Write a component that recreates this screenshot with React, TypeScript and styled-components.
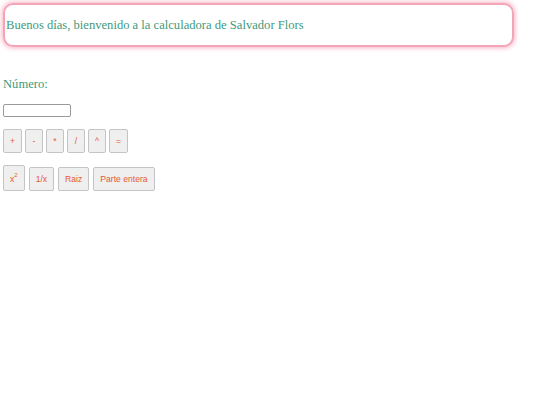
import { createGlobalStyle } from "styled-components";
import styled from "styled-components";

// === Global page reset ===
const GlobalStyle = createGlobalStyle`
  html, body {
    margin: 0;
    padding: 0;
    background: #ffffff;
  }
`;

// Outer wrapper for the calculator page
const Page = styled.main`
  display: flex;
  flex-direction: column;
  align-items: flex-start;
  padding: 3px;
  width: 511px;
  font-family: "Liberation Serif", "Times New Roman", serif;
`;

// Pink rounded greeting banner
const Banner = styled.header`
  box-sizing: border-box;
  width: 511px;
  height: 44px;
  display: flex;
  align-items: center;
  padding: 1px 1px 0;
  border: 2px solid #f5a3b7;
  border-radius: 10px;
  box-shadow: 0 0 5px 1px #f7b3c4;
  color: #3f9a7c;
  font-size: 12.6px;
`;

const Label = styled.label`
  margin-top: 30px;
  color: #3f9a7c;
  font-size: 12.6px;
  line-height: 15px;
`;

const NumberInput = styled.input`
  box-sizing: border-box;
  margin: 12px 0 0;
  width: 68px;
  height: 13px;
  padding: 0 2px;
  border: 1px solid #9a9a9a;
  border-radius: 2px;
  font-size: 8px;
`;

// One row of operator buttons
const Row = styled.div<{ $top: number; $gap: number }>`
  display: flex;
  align-items: flex-end;
  gap: ${(p) => p.$gap}px;
  margin-top: ${(p) => p.$top}px;
`;

const Key = styled.button<{ $tall?: boolean }>`
  box-sizing: border-box;
  height: ${(p) => (p.$tall ? 26 : 24)}px;
  min-width: 18px;
  padding: 0 6px;
  background: #efefef;
  border: 1px solid #c4c4c4;
  border-radius: 2px;
  color: #e45a34;
  font-family: "Liberation Sans", Arial, sans-serif;
  font-size: 8.6px;

  sup {
    font-size: 6px;
    vertical-align: 5px;
  }
`;

export default function App() {
  return (
    <>
      <GlobalStyle />
      <Page>
        <Banner>Buenos días, bienvenido a la calculadora de Salvador Flors</Banner>
        <Label htmlFor="numero">Número:</Label>
        <NumberInput id="numero" type="text" />
        <Row $top={12} $gap={3}>
          <Key>+</Key>
          <Key>-</Key>
          <Key>*</Key>
          <Key>/</Key>
          <Key>^</Key>
          <Key>=</Key>
        </Row>
        <Row $top={12} $gap={4}>
          <Key $tall>
            x<sup>2</sup>
          </Key>
          <Key>1/x</Key>
          <Key>Raiz</Key>
          <Key>Parte entera</Key>
        </Row>
      </Page>
    </>
  );
}
